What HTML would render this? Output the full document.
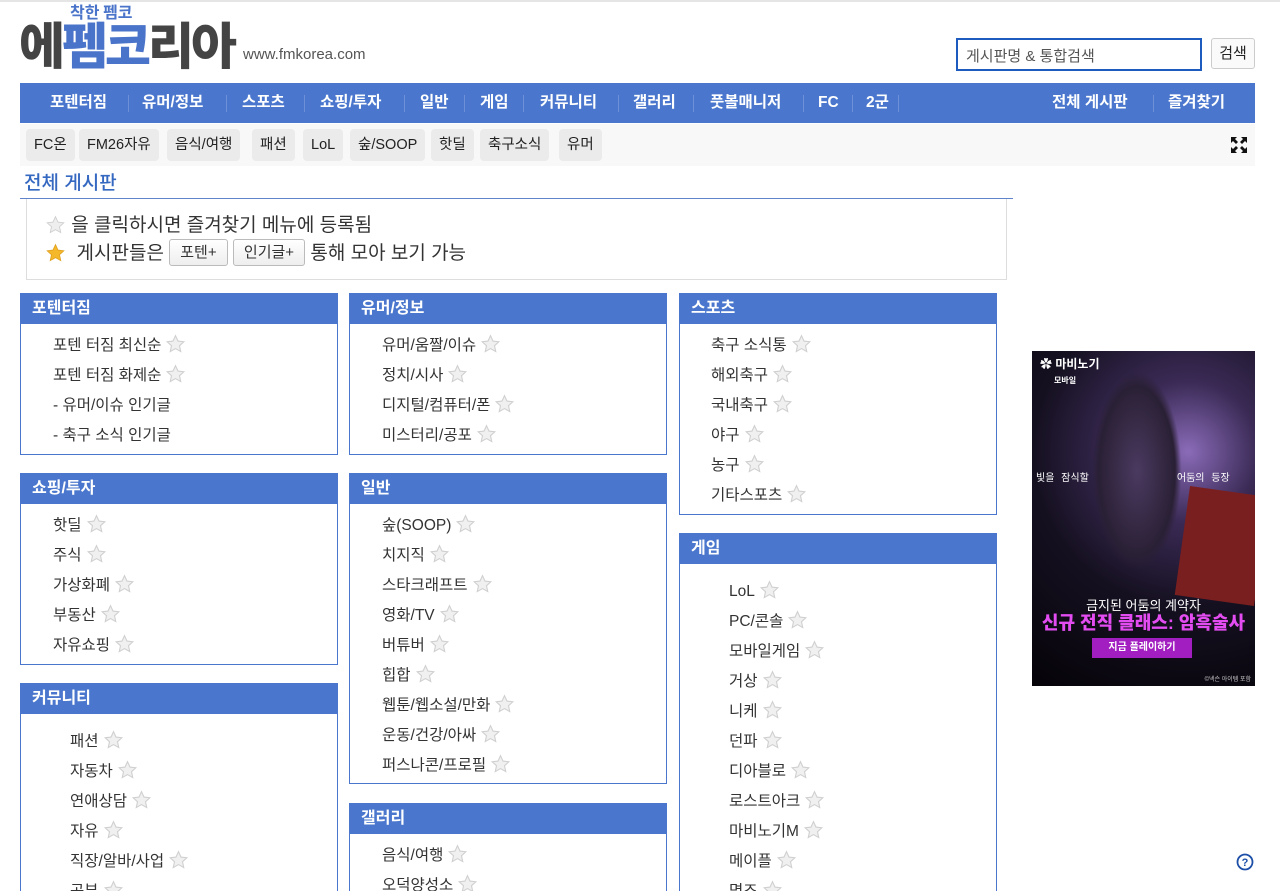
<!DOCTYPE html>
<html style="overflow:hidden;height:891px"><head><meta charset="utf-8"><style>
*{margin:0;padding:0;box-sizing:border-box}
body{width:1280px;height:891px;overflow:hidden;background:#fff;font-family:"Liberation Sans","Noto Sans CJK KR",sans-serif;color:#333;position:relative}
.a{position:absolute}
.topline{left:0;top:0;width:1280px;height:2px;background:#e5e5e5}
.logo{left:19px;top:18px;font-size:50px;font-weight:900;letter-spacing:-3px;color:#444;line-height:50px;font-family:"Noto Sans CJK KR",sans-serif}
.logo b{color:#4a74c9}
.small{left:68px;top:3px;font-size:16px;font-weight:700;color:#4a74c9;font-family:"Noto Sans CJK KR",sans-serif;line-height:17px;background:#fff;padding:0 2px}
.url{left:243px;top:46px;font-size:15px;color:#555}
.search{left:956px;top:38px;width:246px;height:33px;border:2px solid #1d5bbf;font-size:15px;color:#555;padding:5px 8px}
.btn{left:1211px;top:38px;width:44px;height:31px;border:1px solid #ccc;border-radius:3px;font-size:15px;text-align:center;line-height:29px;color:#222;background:#fafafa}
.nav{left:20px;top:83px;width:1235px;height:40px;background:#4a77cd;color:#fff;font-weight:700;font-size:15.5px}
.nav span{position:absolute;top:0;line-height:40px}
.nav i{position:absolute;top:12px;width:1px;height:17px;background:#6d90d6}
.sub{left:20px;top:124px;width:1235px;height:42px;background:#f8f8f8}
.pill{position:absolute;top:5px;height:32px;background:#ebebeb;border-radius:4px;font-size:14.5px;line-height:32px;padding:0 8px;color:#222}
.title{left:24px;top:168px;font-size:19px;color:#3568c0;font-weight:500}
.hr{left:20px;top:198px;width:993px;height:1px;background:#5f84cc}
.info{left:26px;top:199px;width:981px;height:81px;border:1px solid #ddd;border-top:none;font-size:19px;color:#333}
.sm{display:inline-block;border:1px solid #bbb;border-radius:3px;font-size:15px;padding:0 10px;height:27px;line-height:25px;background:linear-gradient(#fff,#eee);vertical-align:2px}
.box{position:absolute;width:318px;border:1px solid #4a77cd}
.box h3{background:#4a77cd;color:#fff;font-size:16px;height:30px;line-height:30px;padding-left:11px}
.box ul{list-style:none;font-size:15.5px;color:#333}
.box li{height:30px;line-height:30px;white-space:nowrap}
.st{display:inline-block;width:21px;height:20px;vertical-align:-4px;margin-left:4px}
.ad{left:1032px;top:351px;width:223px;height:335px;background:radial-gradient(circle at 70% 30%,#8a6bb8 0,#3a2a55 25%,#151020 55%,#050308 100%);overflow:hidden;color:#fff}
</style></head><body>
<div class="a topline"></div>
<div class="a logo">에<b>펨코</b>리아</div>
<div class="a small">착한 펨코</div>
<div class="a url">www.fmkorea.com</div>
<div class="a search">게시판명 &amp; 통합검색</div>
<div class="a btn">검색</div>
<div class="a nav">
<span style="left:30px">포텐터짐</span><i style="left:108px"></i>
<span style="left:122px">유머/정보</span><i style="left:206px"></i>
<span style="left:222px">스포츠</span><i style="left:284px"></i>
<span style="left:300px">쇼핑/투자</span><i style="left:384px"></i>
<span style="left:400px">일반</span><i style="left:444px"></i>
<span style="left:460px">게임</span><i style="left:503px"></i>
<span style="left:520px">커뮤니티</span><i style="left:598px"></i>
<span style="left:613px">갤러리</span><i style="left:673px"></i>
<span style="left:690px">풋볼매니저</span><i style="left:783px"></i>
<span style="left:798px">FC</span><i style="left:832px"></i>
<span style="left:846px">2군</span><i style="left:878px"></i>
<span style="left:1032px">전체 게시판</span><i style="left:1133px"></i>
<span style="left:1148px">즐겨찾기</span>
</div>
<div class="a sub">
<div class="pill" style="left:6px">FC온</div>
<div class="pill" style="left:59px">FM26자유</div>
<div class="pill" style="left:147px">음식/여행</div>
<div class="pill" style="left:232px">패션</div>
<div class="pill" style="left:283px">LoL</div>
<div class="pill" style="left:330px">숲/SOOP</div>
<div class="pill" style="left:411px">핫딜</div>
<div class="pill" style="left:460px">축구소식</div>
<div class="pill" style="left:539px">유머</div>
<svg style="position:absolute;left:1210px;top:12px" width="18" height="18" viewBox="0 0 18 18"><path d="M1 1h6L5 3l3 3-2 2-3-3-2 2zM17 1v6l-2-2-3 3-2-2 3-3-2-2zM1 17v-6l2 2 3-3 2 2-3 3 2 2zM17 17h-6l2-2-3-3 2-2 3 3 2-2z" fill="#111"/></svg>
</div>
<div class="a title">전체 게시판</div>
<div class="a hr"></div>
<div class="a info">
<div style="position:absolute;left:18px;top:11px"><svg class="st" style="margin:0" viewBox="0 0 24 24"><path d="M12 2l3 6.5 7 .8-5.2 4.8 1.5 7-6.3-3.6-6.3 3.6 1.5-7L2 9.3l7-.8z" fill="#eee" stroke="#ccc"/></svg> 을 클릭하시면 즐겨찾기 메뉴에 등록됨</div>
<div style="position:absolute;left:18px;top:39px"><svg class="st" style="margin:0" viewBox="0 0 24 24"><path d="M12 2l3 6.5 7 .8-5.2 4.8 1.5 7-6.3-3.6-6.3 3.6 1.5-7L2 9.3l7-.8z" fill="#f5b82a" stroke="#e0a020"/></svg> &nbsp;게시판들은 <span class="sm">포텐+</span> <span class="sm">인기글+</span> 통해 모아 보기 가능</div>
</div>

<svg width="0" height="0" style="position:absolute"><defs><symbol id="s" viewBox="0 0 24 24"><path d="M12 2l3 6.5 7 .8-5.2 4.8 1.5 7-6.3-3.6-6.3 3.6 1.5-7L2 9.3l7-.8z" fill="#f0f0f0" stroke="#cfcfcf" stroke-width="1.3"/></symbol></defs></svg>

<div class="box" style="left:20px;top:293px;height:162px"><h3>포텐터짐</h3><ul style="padding:7px 0 0 32px">
<li>포텐 터짐 최신순<svg class="st"><use href="#s"/></svg></li><li>포텐 터짐 화제순<svg class="st"><use href="#s"/></svg></li><li>- 유머/이슈 인기글</li><li>- 축구 소식 인기글</li></ul></div>
<div class="box" style="left:20px;top:473px;height:192px"><h3>쇼핑/투자</h3><ul style="padding:7px 0 0 32px">
<li>핫딜<svg class="st"><use href="#s"/></svg></li><li>주식<svg class="st"><use href="#s"/></svg></li><li>가상화폐<svg class="st"><use href="#s"/></svg></li><li>부동산<svg class="st"><use href="#s"/></svg></li><li>자유쇼핑<svg class="st"><use href="#s"/></svg></li></ul></div>
<div class="box" style="left:20px;top:683px;height:220px"><h3>커뮤니티</h3><ul style="padding:13px 0 0 49px">
<li>패션<svg class="st"><use href="#s"/></svg></li><li>자동차<svg class="st"><use href="#s"/></svg></li><li>연애상담<svg class="st"><use href="#s"/></svg></li><li>자유<svg class="st"><use href="#s"/></svg></li><li>직장/알바/사업<svg class="st"><use href="#s"/></svg></li><li>공부<svg class="st"><use href="#s"/></svg></li></ul></div>

<div class="box" style="left:349px;top:293px;height:162px"><h3>유머/정보</h3><ul style="padding:7px 0 0 32px">
<li>유머/움짤/이슈<svg class="st"><use href="#s"/></svg></li><li>정치/시사<svg class="st"><use href="#s"/></svg></li><li>디지털/컴퓨터/폰<svg class="st"><use href="#s"/></svg></li><li>미스터리/공포<svg class="st"><use href="#s"/></svg></li></ul></div>
<div class="box" style="left:349px;top:473px;height:311px"><h3>일반</h3><ul style="padding:7px 0 0 32px">
<li>숲(SOOP)<svg class="st"><use href="#s"/></svg></li><li>치지직<svg class="st"><use href="#s"/></svg></li><li>스타크래프트<svg class="st"><use href="#s"/></svg></li><li>영화/TV<svg class="st"><use href="#s"/></svg></li><li>버튜버<svg class="st"><use href="#s"/></svg></li><li>힙합<svg class="st"><use href="#s"/></svg></li><li>웹툰/웹소설/만화<svg class="st"><use href="#s"/></svg></li><li>운동/건강/아싸<svg class="st"><use href="#s"/></svg></li><li>퍼스나콘/프로필<svg class="st"><use href="#s"/></svg></li></ul></div>
<div class="box" style="left:349px;top:803px;height:120px"><h3>갤러리</h3><ul style="padding:7px 0 0 32px">
<li>음식/여행<svg class="st"><use href="#s"/></svg></li><li>오덕양성소<svg class="st"><use href="#s"/></svg></li></ul></div>

<div class="box" style="left:679px;top:293px;height:222px"><h3>스포츠</h3><ul style="padding:7px 0 0 31px">
<li>축구 소식통<svg class="st"><use href="#s"/></svg></li><li>해외축구<svg class="st"><use href="#s"/></svg></li><li>국내축구<svg class="st"><use href="#s"/></svg></li><li>야구<svg class="st"><use href="#s"/></svg></li><li>농구<svg class="st"><use href="#s"/></svg></li><li>기타스포츠<svg class="st"><use href="#s"/></svg></li></ul></div>
<div class="box" style="left:679px;top:533px;height:380px"><h3>게임</h3><ul style="padding:13px 0 0 49px">
<li>LoL<svg class="st"><use href="#s"/></svg></li><li>PC/콘솔<svg class="st"><use href="#s"/></svg></li><li>모바일게임<svg class="st"><use href="#s"/></svg></li><li>거상<svg class="st"><use href="#s"/></svg></li><li>니케<svg class="st"><use href="#s"/></svg></li><li>던파<svg class="st"><use href="#s"/></svg></li><li>디아블로<svg class="st"><use href="#s"/></svg></li><li>로스트아크<svg class="st"><use href="#s"/></svg></li><li>마비노기M<svg class="st"><use href="#s"/></svg></li><li>메이플<svg class="st"><use href="#s"/></svg></li><li>명조<svg class="st"><use href="#s"/></svg></li></ul></div>

<div class="a ad">
<div style="position:absolute;left:8px;top:4px;font-size:12px;font-weight:700">✿ 마비노기<br><span style="font-size:8px;margin-left:14px">모바일</span></div>
<div style="position:absolute;left:60px;top:20px;width:90px;height:200px;background:radial-gradient(ellipse,#4a3a60 0,#2a2035 60%,transparent 70%)"></div>
<div style="position:absolute;left:4px;top:118px;font-size:10px;word-spacing:4px">빛을 잠식할 &nbsp;&nbsp;&nbsp;&nbsp;&nbsp;&nbsp;&nbsp;&nbsp;&nbsp;&nbsp;&nbsp;&nbsp;어둠의 등장</div>
<div style="position:absolute;left:150px;top:140px;width:80px;height:110px;background:#7a1f1f;transform:rotate(8deg)"></div>
<div style="position:absolute;left:0;top:244px;width:223px;text-align:center;font-size:13px">금지된 어둠의 계약자</div>
<div style="position:absolute;left:0;top:258px;width:223px;text-align:center;font-size:18px;font-weight:900;color:#e24cf0">신규 전직 클래스: 암흑술사</div>
<div style="position:absolute;left:60px;top:287px;width:100px;height:20px;background:#a21ec0;text-align:center;font-size:10px;line-height:20px;font-weight:700">지금 플레이하기</div>
<div style="position:absolute;right:4px;bottom:3px;font-size:6px;color:#ccc">©넥슨 아이템 포함</div>
</div>
<svg class="a" style="left:1236px;top:853px" width="18" height="18" viewBox="0 0 18 18"><circle cx="9" cy="9" r="7.5" fill="none" stroke="#1d4fa8" stroke-width="1.8"/><text x="9" y="13" font-size="11" font-weight="700" text-anchor="middle" fill="#1d4fa8" font-family="Liberation Sans">?</text></svg>
</body></html>
